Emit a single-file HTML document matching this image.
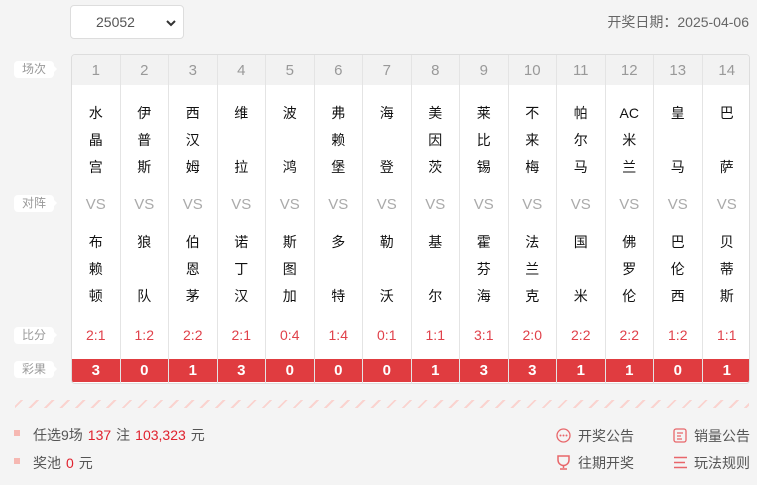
<!DOCTYPE html>
<html><head><meta charset="utf-8"><style>
*{margin:0;padding:0;box-sizing:border-box}
body{width:757px;height:485px;background:#f4f4f4;font-family:"Liberation Sans","Noto Sans CJK SC",sans-serif;position:relative;overflow:hidden;color:#333}
.sel{position:absolute;left:70px;top:5px;width:114px;height:34px;background:#fff;border:1px solid #ddd;border-radius:4px;font-size:14px;color:#555;padding:8px 0 0 25px}
.sel svg{position:absolute;right:7px;top:14px}
.date{position:absolute;right:8px;top:12px;font-size:14px;color:#666}
.tag{position:absolute;left:14px;width:40px;height:17px;background:#fff;border-radius:4px;font-size:12px;color:#999;text-align:center;line-height:17px}
.tag:after{content:"";position:absolute;right:-3px;top:5px;border-left:3px solid #fff;border-top:3px solid transparent;border-bottom:3px solid transparent}
.tbl{position:absolute;left:71px;top:54px;width:679px;height:330px;background:#fff;border:1px solid #ddd;border-radius:4px;overflow:hidden}
.hd{position:absolute;left:0;top:0;width:100%;height:30px;background:#f2f2f2}
.col{position:absolute;top:0;width:48.5px;height:330px;border-right:1px solid #e4e4e4;text-align:center}
.col .n{position:absolute;top:7px;width:100%;font-size:15px;color:#999}
.team{position:absolute;width:100%;height:70px;display:flex;flex-direction:column;justify-content:space-between;align-items:center;font-size:14px;color:#111;line-height:16px}
.vs{position:absolute;top:141px;width:100%;font-size:15px;color:#aaa}
.sc{position:absolute;top:272px;width:100%;font-size:14px;color:#e0414a}
.rs{position:absolute;top:304px;width:100%;height:23px;background:#e03c40;color:#fff;font-weight:bold;font-size:15px;line-height:23px}
.stripe{position:absolute;left:15px;top:400px;width:734px;height:8px;background:repeating-linear-gradient(135deg,transparent 0 4px,#fad3cf 4px 6px,transparent 6px 11px)}
.info{position:absolute;left:33px;font-size:14px;color:#555}
.info b{font-weight:normal;margin:0 5px}
.info i{position:absolute;left:-19px;top:5px;width:6px;height:6px;background:#f6b8b2}
.red{color:#e0222e}
.lk{position:absolute;font-size:14px;color:#555}
</style></head><body>
<div class="sel">25052<svg width="10" height="7" viewBox="0 0 10 7"><path d="M1 1l4 4 4-4" stroke="#333" stroke-width="2" fill="none"/></svg></div>
<div class="date">开奖日期：2025-04-06</div>
<div class="tag" style="top:61px">场次</div>
<div class="tag" style="top:195px">对阵</div>
<div class="tag" style="top:327px">比分</div>
<div class="tag" style="top:361px">彩果</div>
<div class="tbl"><div class="hd"></div>
<div id="cols"></div>
</div>
<div class="stripe"></div>
<div class="info" style="top:425px"><i></i>任选9场<b class="red">137</b>注<b class="red">103,323</b>元</div>
<div class="info" style="top:453px"><i></i>奖池<b class="red">0</b>元</div>
<svg style="position:absolute;left:556px;top:428px" width="15" height="15"><circle cx="7.5" cy="7.5" r="6.5" fill="none" stroke="#e8666a" stroke-width="1.3"/><circle cx="4.5" cy="7.5" r="1" fill="#e8666a"/><circle cx="7.5" cy="7.5" r="1" fill="#e8666a"/><circle cx="10.5" cy="7.5" r="1" fill="#e8666a"/></svg>
<div class="lk" style="left:578px;top:426px">开奖公告</div>
<svg style="position:absolute;left:673px;top:428px" width="14" height="15"><rect x="1" y="1" width="12" height="13" rx="2" fill="none" stroke="#e8666a" stroke-width="1.3"/><path d="M4 5h6M4 8h4M4 11h5" stroke="#e8666a" stroke-width="1.2"/></svg>
<div class="lk" style="left:694px;top:426px">销量公告</div>
<svg style="position:absolute;left:556px;top:455px" width="15" height="15"><path d="M2 1h11v4a5.5 5.5 0 0 1-11 0z" fill="none" stroke="#e8666a" stroke-width="1.5"/><path d="M7.5 10v3M4 14h7" stroke="#e8666a" stroke-width="1.5"/></svg>
<div class="lk" style="left:578px;top:453px">往期开奖</div>
<svg style="position:absolute;left:673px;top:456px" width="15" height="13"><path d="M1 1.5h13M1 6.5h11M1 11.5h13" stroke="#e8666a" stroke-width="1.5"/></svg>
<div class="lk" style="left:694px;top:453px">玩法规则</div>
<script>
var H=[["水","晶","宫"],["伊","普","斯"],["西","汉","姆"],["维","","拉"],["波","","鸿"],["弗","赖","堡"],["海","","登"],["美","因","茨"],["莱","比","锡"],["不","来","梅"],["帕","尔","马"],["AC","米","兰"],["皇","","马"],["巴","","萨"]];
var A=[["布","赖","顿"],["狼","","队"],["伯","恩","茅"],["诺","丁","汉"],["斯","图","加"],["多","","特"],["勒","","沃"],["基","","尔"],["霍","芬","海"],["法","兰","克"],["国","","米"],["佛","罗","伦"],["巴","伦","西"],["贝","蒂","斯"]];
var S=["2:1","1:2","2:2","2:1","0:4","1:4","0:1","1:1","3:1","2:0","2:2","2:2","1:2","1:1"];
var R=[3,0,1,3,0,0,0,1,3,3,1,1,0,1];
var h="";
for(var i=0;i<14;i++){
 var t=function(a,top){return '<div class="team" style="top:'+top+'px"><span>'+a[0]+'</span><span>'+(a[1]||"&nbsp;")+'</span><span>'+a[2]+'</span></div>';};
 h+='<div class="col" style="left:'+(i*48.5)+'px'+(i==13?';border-right:none':'')+'"><div class="n">'+(i+1)+'</div>'+t(H[i],50)+'<div class="vs">VS</div>'+t(A[i],179)+'<div class="sc">'+S[i]+'</div><div class="rs">'+R[i]+'</div></div>';
}
document.getElementById("cols").innerHTML=h;
</script>
</body></html>
